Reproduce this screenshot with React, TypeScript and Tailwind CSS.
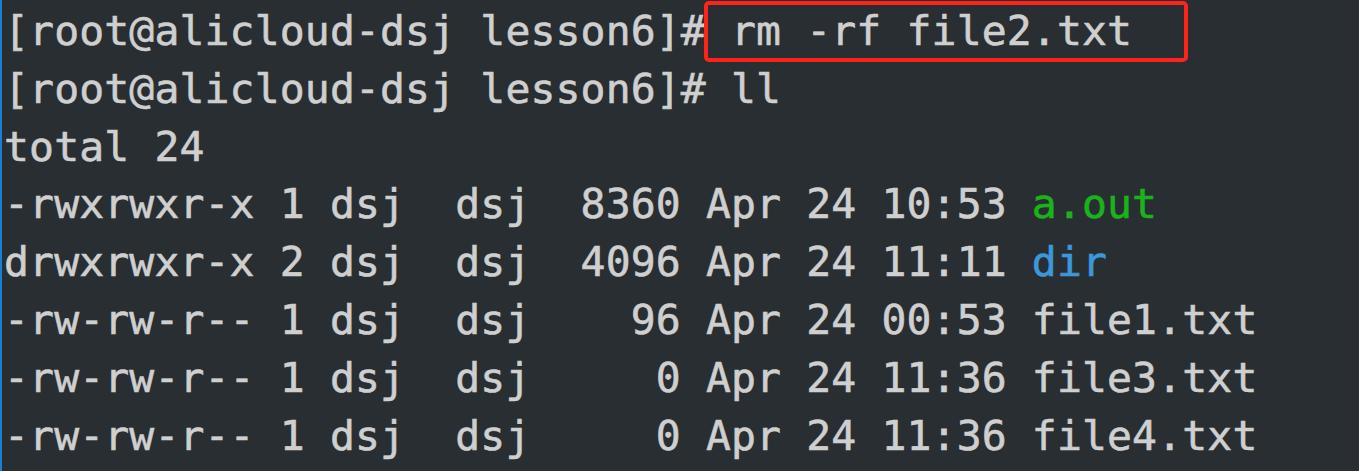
const lines: { text: string; name?: string; color?: string }[] = [
  { text: "[root@alicloud-dsj lesson6]# rm -rf file2.txt" },
  { text: "[root@alicloud-dsj lesson6]# ll" },
  { text: "total 24" },
  { text: "-rwxrwxr-x 1 dsj  dsj  8360 Apr 24 10:53 ", name: "a.out", color: "text-[#19b419]" },
  { text: "drwxrwxr-x 2 dsj  dsj  4096 Apr 24 11:11 ", name: "dir", color: "text-[#3b98da]" },
  { text: "-rw-rw-r-- 1 dsj  dsj    96 Apr 24 00:53 file1.txt" },
  { text: "-rw-rw-r-- 1 dsj  dsj     0 Apr 24 11:36 file3.txt" },
  { text: "-rw-rw-r-- 1 dsj  dsj     0 Apr 24 11:36 file4.txt" },
];

export default function App() {
  return (
    <div className="relative h-[471px] w-[1359px] overflow-hidden border-l-2 border-[#1a7fd4] bg-[#292e33]">
      <div className="pl-[2px] pt-[3px] font-['DejaVu_Sans_Mono',monospace] text-[41.4px] leading-[57.8px] tracking-[0.15px] whitespace-pre text-[#cfcfcf] [-webkit-text-stroke:0.6px_currentColor]">
        {lines.map((l, i) => (
          <div key={i}>
            {l.text}
            {l.name && <span className={l.color}>{l.name}</span>}
          </div>
        ))}
      </div>

      {/* red highlight around the command */}
      <div className="pointer-events-none absolute left-[702px] top-px h-[61px] w-[484px] rounded-[5px] border-4 border-[#ff2419]" />
    </div>
  );
}
